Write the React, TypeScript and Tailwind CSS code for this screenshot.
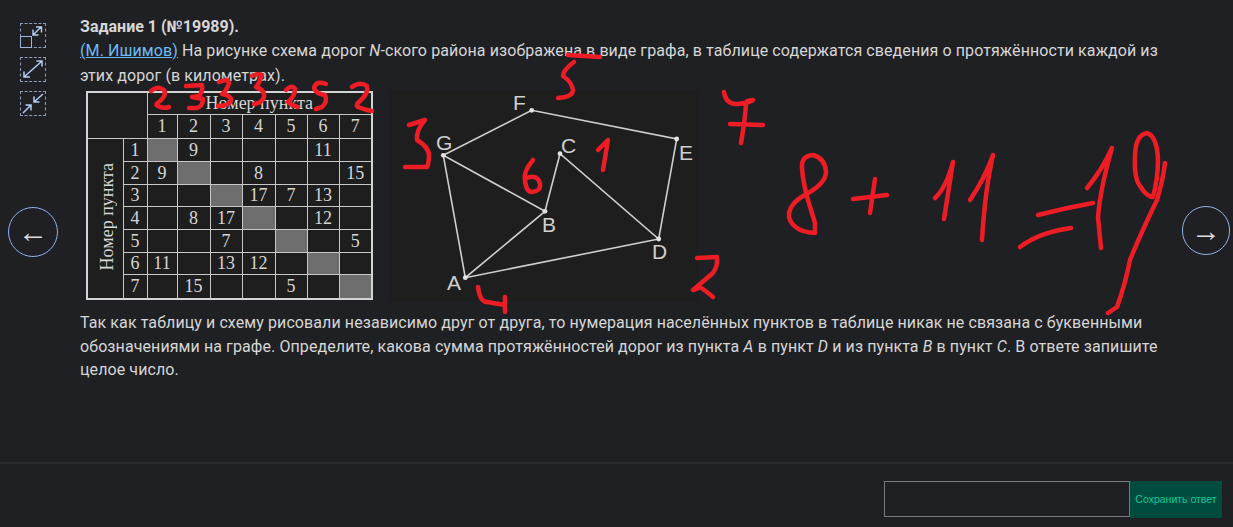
const cols = [30, 33, 32, 33, 32, 32, 33]
const rows = [
  ["", "9", "", "", "", "11", ""],
  ["9", "", "", "8", "", "", "15"],
  ["", "", "", "17", "7", "13", ""],
  ["", "8", "17", "", "", "12", ""],
  ["", "", "7", "", "", "", "5"],
  ["11", "", "13", "12", "", "", ""],
  ["", "15", "", "", "5", "", ""],
]
const rowHeights = [23, 23, 22, 23, 23, 22, 25]

const cell = "border border-[#c8c8c8] p-0 text-center align-middle"
const iconBtn = "relative h-[25px] w-[26px] border border-dashed border-[#8d9db8] text-[#b4cdf2]"

function DistanceTable() {
  return (
    <table className="h-[207px] w-[287px] shrink-0 table-fixed border-collapse border-2 border-[#d4d4d4] bg-[#1e1e1e] font-['Liberation_Serif',serif] text-[18px] leading-none text-[#d6d6d6]">
      <colgroup>
        <col className="w-[36px]" />
        <col className="w-[24px]" />
        {cols.map((w, i) => (
          <col key={i} style={{ width: w }} />
        ))}
      </colgroup>
      <tbody>
        <tr className="h-[22px]">
          <td colSpan={2} rowSpan={2} className={cell} />
          <td colSpan={7} className={cell}>Номер пункта</td>
        </tr>
        <tr className="h-[24px]">
          {cols.map((_, i) => (
            <td key={i} className={cell}>{i + 1}</td>
          ))}
        </tr>
        {rows.map((row, r) => (
          <tr key={r} style={{ height: rowHeights[r] }}>
            {r === 0 && (
              <td rowSpan={7} className={`${cell} pl-[4px]`}>
                <span className="inline-block rotate-180 [writing-mode:vertical-rl]">Номер пункта</span>
              </td>
            )}
            <td className={cell}>{r + 1}</td>
            {row.map((v, c) => (
              <td key={c} className={`${cell} ${r === c ? "bg-[#6e6e6e]" : ""}`}>{v}</td>
            ))}
          </tr>
        ))}
      </tbody>
    </table>
  )
}

const points: [number, number][] = [
  [142.7, 20.3], [287.7, 49], [54.3, 65.3], [171, 63.7], [156, 121.3], [269.7, 149], [76.3, 187.7],
]

function Graph() {
  return (
    <svg width="310" height="212" viewBox="0 0 310 212" className="shrink-0 bg-[#1e1e1f]">
      <path
        d="M54.3 65.3L142.7 20.3L287.7 49L269.7 149L171 63.7L156 121.3L54.3 65.3L76.3 187.7L156 121.3M76.3 187.7L269.7 149"
        fill="none"
        stroke="#cfcfcf"
        strokeWidth="1.6"
      />
      {points.map(([x, y], i) => (
        <circle key={i} cx={x} cy={y} r="2.4" fill="#e2e2e2" />
      ))}
      <g fill="#d0d0d0" fontFamily="'Liberation Sans', sans-serif" fontSize="21">
        <text x="124" y="20">F</text>
        <text x="47" y="60">G</text>
        <text x="172" y="63">C</text>
        <text x="290" y="70">E</text>
        <text x="153" y="142">B</text>
        <text x="263" y="169">D</text>
        <text x="58" y="200">A</text>
      </g>
    </svg>
  )
}

// красные пометки от руки поверх задания
const scribbles = [
  "M151 91Q158 85 164 90Q167 95 160 101Q154 105 158 106Q163 109 169 107",
  "M186 86L202 85Q203 92 199 96L192 97L203 99Q203 106 197 108L189 108",
  "M219 82Q228 78 229 83Q226 92 222 94Q232 96 231 101Q228 106 218 106",
  "M252 76Q258 73 262 75Q259 84 256 87Q265 90 264 97Q262 103 254 104",
  "M286 90Q292 84 295 89Q295 96 288 102Q292 106 298 107",
  "M326 84Q316 80 314 88Q316 94 325 95Q328 102 322 107L316 109",
  "M352 87Q360 81 367 86Q369 93 360 101Q355 105 358 107Q365 110 372 111",
  "M568 55L600 57M574 62Q563 70 563 76Q572 82 573 90Q573 97 558 98",
  "M724 92Q726 105 738 104Q748 103 753 100Q746 100 746 104Q745 120 741 143M730 124L763 125",
  "M409 125L425 120Q416 130 417 140Q430 148 429 157Q428 167 427 167L405 167",
  "M533 160Q523 172 525 180Q526 192 532 192Q541 191 540 184Q538 174 527 178",
  "M598 150L608 140L603 170",
  "M697 258L717 257Q718 266 713 273L693 290Q694 291 700 287Q706 291 713 297",
  "M478 287Q480 302 487 302L505 305M505 297L505 312",
  "M813 155Q801 156 802 168Q803 183 808 200L815 223L815 233Q802 232 797 228Q788 222 789 213Q791 203 803 196Q826 184 826 172Q825 158 813 155",
  "M853 199L887 195M875 179L870 213",
  "M935 198Q946 188 953 162L944 219",
  "M970 200Q985 178 993 155Q985 190 982 240",
  "M1038 215Q1065 208 1093 203M1020 247Q1040 232 1071 228",
  "M1087 188Q1102 170 1112 148Q1100 190 1098 217L1101 248",
  "M1147 133Q1135 135 1135 157Q1134 178 1140 186Q1147 197 1153 197Q1158 178 1158 160Q1157 136 1147 133",
  "M1165 163Q1163 180 1157 200Q1140 235 1130 260Q1125 285 1117 307L1108 313",
]

export default function App() {
  return (
    <div className="relative flex h-[527px] w-[1233px] flex-col overflow-hidden bg-[#1f2023] font-['Roboto',sans-serif] text-[16px] text-[#d6d6d6]">
      <div className="flex flex-1">
        <aside className="flex w-[80px] shrink-0 flex-col pl-2 pt-[23px]">
          <div className="flex flex-col gap-[9px] pl-3">
            <button className={iconBtn}>
              <svg width="24" height="23" viewBox="0 0 24 23" fill="none" stroke="currentColor" strokeWidth="1.4" className="absolute left-0 top-0">
                <path d="M12 11L20 3M15 3h5.5v5.5M12 5.5V11h5.5" />
              </svg>
              <span className="absolute bottom-[-1px] left-[-1px] h-[12px] w-[12px] border border-[#9fb4d6] bg-[#1f2023]" />
            </button>
            <button className={iconBtn}>
              <svg width="24" height="23" viewBox="0 0 24 23" fill="none" stroke="currentColor" strokeWidth="1.5" className="absolute left-0 top-0">
                <path d="M3 19L21 3M15.5 3h5.5v5.5M3 13.5V19h6" />
              </svg>
            </button>
            <button className={iconBtn}>
              <svg width="24" height="23" viewBox="0 0 24 23" fill="none" stroke="currentColor" strokeWidth="1.5" className="absolute left-0 top-0">
                <path d="M22 2L13 10M13 4.5V10h5.5M2 21L10 13M4.5 13H10v5.5" />
              </svg>
            </button>
          </div>
          <button className="mt-[91px] flex h-[50px] w-[50px] items-center justify-center rounded-full border border-[#8fb3e6] font-['Liberation_Sans',sans-serif] text-[30px] leading-none text-[#dcdcdc]">
            ←
          </button>
        </aside>

        <main className="w-[1097px] shrink-0 pt-[16px]">
          <h2 className="text-[16px] font-bold leading-[22px]">Задание 1 (№19989).</h2>
          <p className="w-[1090px] leading-[25px] tracking-[0.09px]">
            <a className="text-[#6ebcf7] underline">(М. Ишимов)</a> На рисунке схема дорог <i>N</i>-ского района изображена в виде графа, в таблице содержатся сведения о протяжённости каждой из этих дорог (в километрах).
          </p>
          <div className="mt-[2px] flex items-start gap-[16px]">
            <div className="ml-[6px] mt-[1px]">
              <DistanceTable />
            </div>
            <Graph />
          </div>
          <p className="mt-[9px] w-[1090px] leading-[23.5px] tracking-[0.09px]">
            Так как таблицу и схему рисовали независимо друг от друга, то нумерация населённых пунктов в таблице никак не связана с буквенными обозначениями на графе. Определите, какова сумма протяжённостей дорог из пункта <i>A</i> в пункт <i>D</i> и из пункта <i>B</i> в пункт <i>C</i>. В ответе запишите целое число.
          </p>
        </main>

        <aside className="pl-[5px] pt-[206px]">
          <button className="flex h-[49px] w-[48px] items-center justify-center rounded-full border border-[#8fb3e6] font-['Liberation_Sans',sans-serif] text-[30px] leading-none text-[#dcdcdc]">
            →
          </button>
        </aside>
      </div>

      <footer className="flex h-[65px] shrink-0 items-start justify-end border-t-2 border-[#2a2b2d] pr-[11px] pt-[17px]">
        <input className="h-[36px] w-[246px] border border-[#7a7a7a] bg-transparent" />
        <button className="h-[37px] w-[92px] bg-[#004d40] font-['Liberation_Sans',sans-serif] text-[10.5px] text-[#12c79a]">
          Сохранить ответ
        </button>
      </footer>

      <svg width="1233" height="527" viewBox="0 0 1233 527" className="pointer-events-none absolute left-0 top-0">
        <g fill="none" stroke="#ee1c25" strokeWidth="4.5" strokeLinecap="round" strokeLinejoin="round">
          {scribbles.map((d, i) => (
            <path key={i} d={d} />
          ))}
        </g>
      </svg>
    </div>
  )
}
